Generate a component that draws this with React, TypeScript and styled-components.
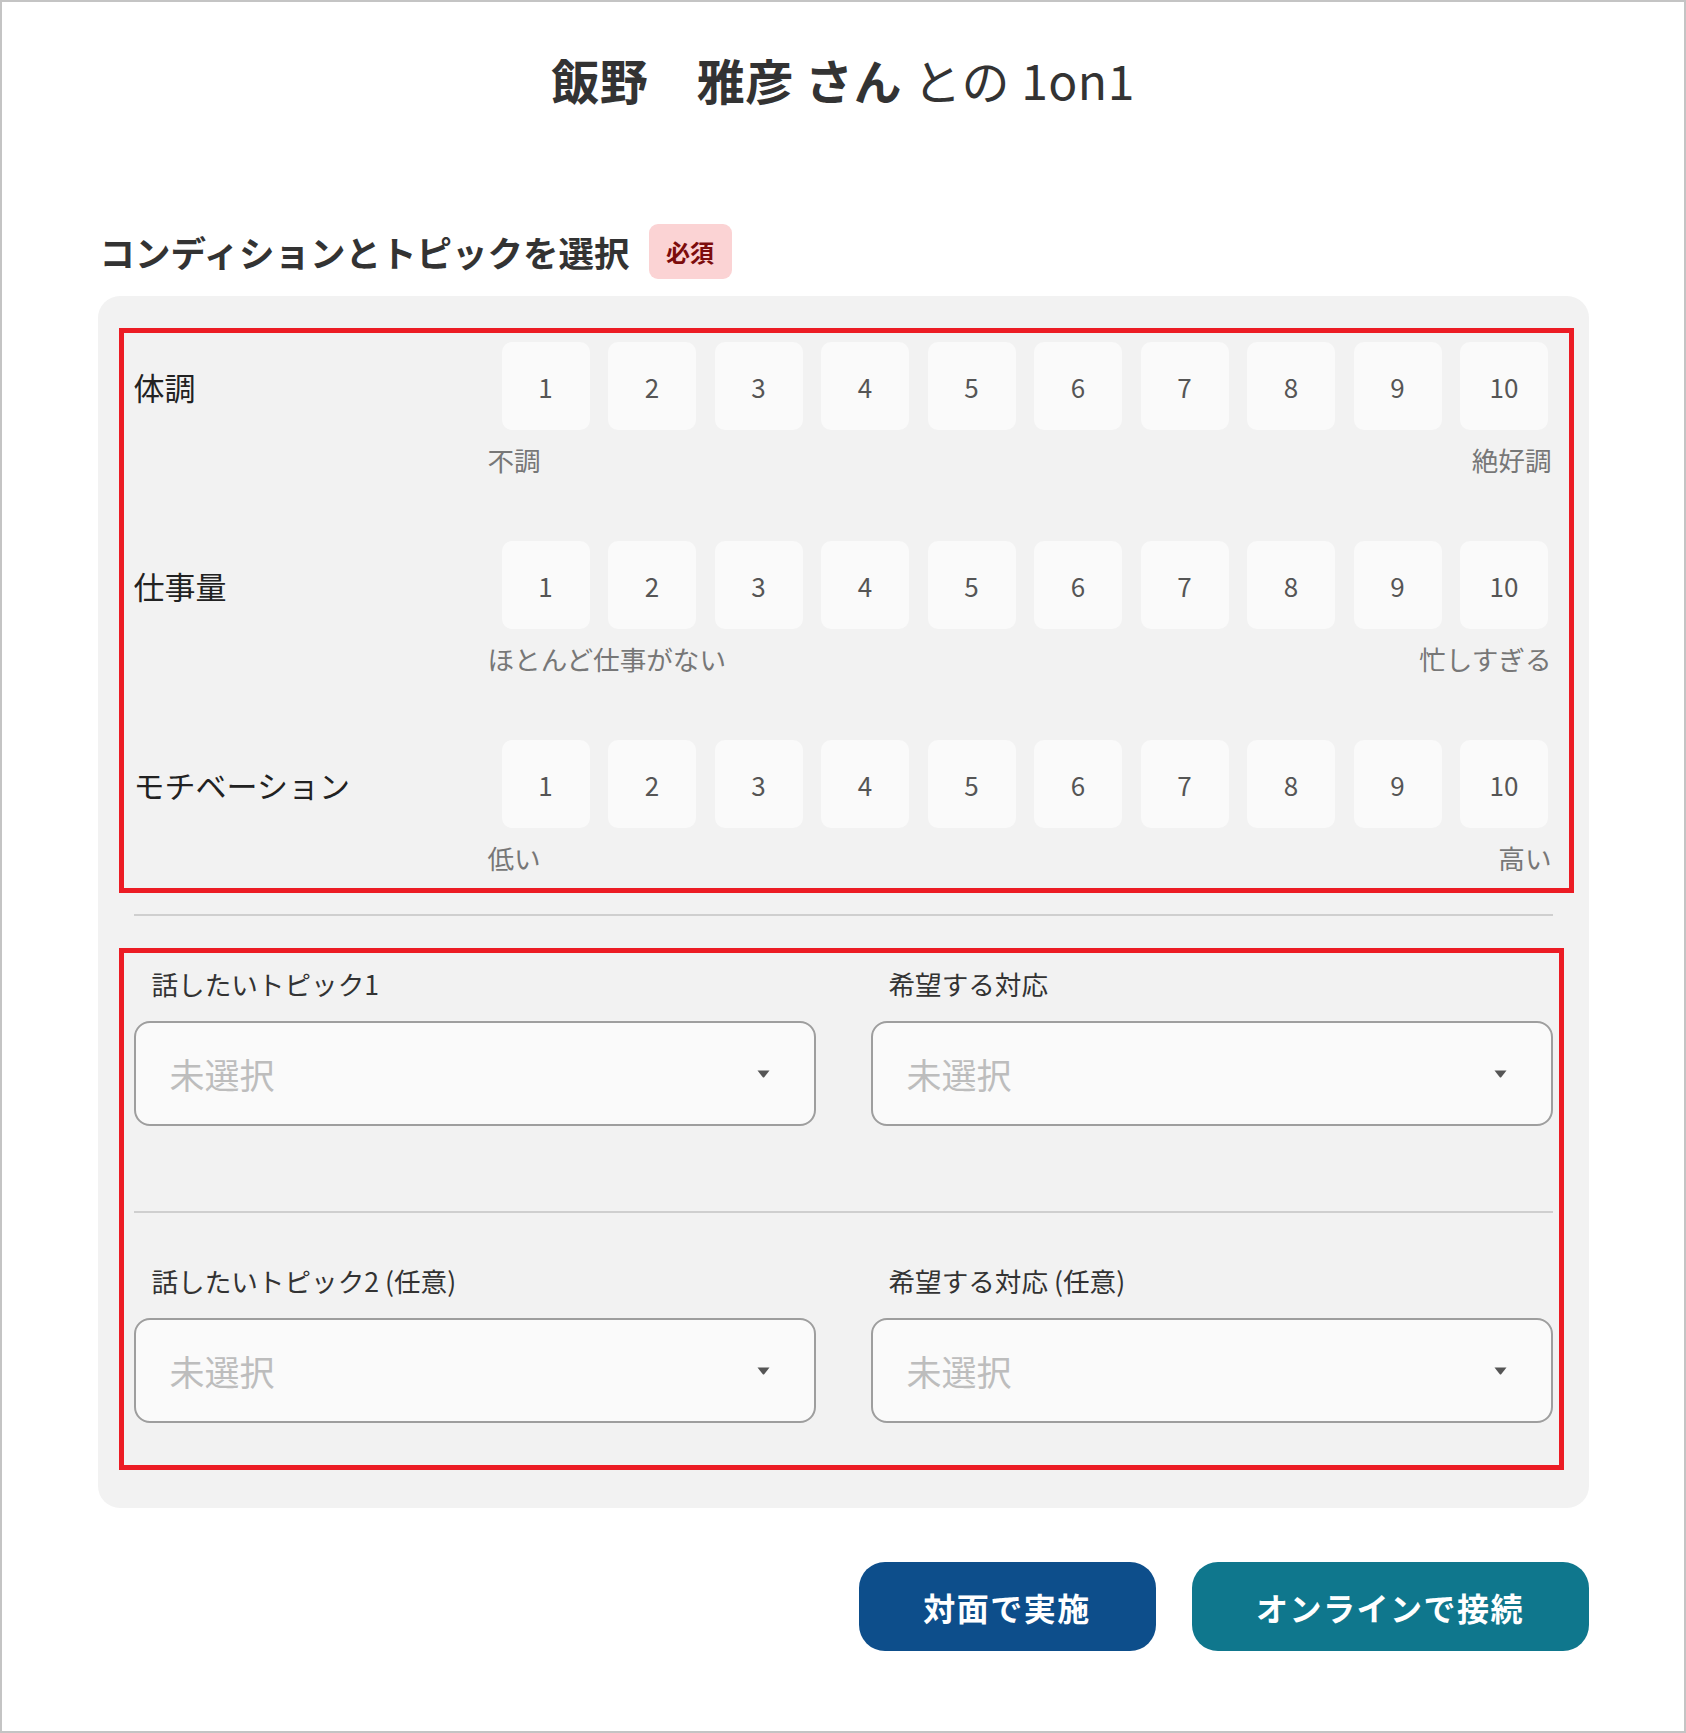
import React from "react";
import styled, { createGlobalStyle } from "styled-components";

const GlobalStyle = createGlobalStyle`
  html, body {
    margin: 0;
    padding: 0;
    background: #ffffff;
  }
  body {
    font-family: "Noto Sans CJK JP", "Noto Sans", sans-serif;
    color: #333333;
  }
  * { box-sizing: border-box; }
`;

const Page = styled.div`
  width: 1686px;
  height: 1733px;
  border: 2px solid #c4c4c4;
  background: #ffffff;
  padding-top: 41px;
  display: flex;
  flex-direction: column;
  align-items: center;
`;

const Title = styled.h1`
  margin: 0;
  font-size: 48px;
  line-height: 72px;
  font-weight: 400;
  color: #333333;
  letter-spacing: 0.5px;
`;

const TitleStrong = styled.span`
  font-weight: 700;
`;

const Container = styled.div`
  width: 1491px;
  margin-top: 109px;
  display: flex;
  flex-direction: column;
`;

const HeadingRow = styled.div`
  display: flex;
  align-items: center;
  gap: 19px;
  height: 55px;
  padding-left: 2px;
`;

const Heading = styled.h2`
  margin: 0;
  font-size: 35.5px;
  line-height: 1;
  font-weight: 700;
  color: #333333;
  letter-spacing: 0;
`;

const Badge = styled.span`
  display: flex;
  align-items: center;
  justify-content: center;
  width: 83px;
  height: 55px;
  border-radius: 9px;
  background: #fbd3d4;
  color: #7d0c0c;
  font-size: 24px;
  font-weight: 700;
`;

const Panel = styled.div`
  margin-top: 17px;
  background: #f2f2f2;
  border-radius: 22px;
  padding: 32px 15px 38px 21px;
  display: flex;
  flex-direction: column;
`;

const HighlightBox = styled.div<{ $pad: string; $mr?: number }>`
  border: 5px solid #ec1c24;
  padding: ${(p) => p.$pad};
  margin-right: ${(p) => p.$mr ?? 0}px;
  display: flex;
  flex-direction: column;
`;

const ScaleList = styled.div`
  display: flex;
  flex-direction: column;
  gap: 63px;
`;

const ScaleRow = styled.div`
  display: flex;
  align-items: flex-start;
`;

const RowLabel = styled.div`
  flex: 1;
  height: 88px;
  display: flex;
  align-items: center;
  font-size: 31px;
  color: #222222;
`;

const ScaleColumn = styled.div`
  width: 1064px;
  display: flex;
  flex-direction: column;
`;

const Boxes = styled.div`
  display: flex;
  gap: 18.5px;
  padding-left: 14px;
`;

const NumBox = styled.button`
  width: 88px;
  height: 88px;
  border: none;
  border-radius: 10px;
  background: #fafafa;
  font-family: "Noto Sans CJK JP", "Noto Sans", sans-serif;
  font-size: 26px;
  color: #555555;
  display: flex;
  align-items: center;
  justify-content: center;
  padding: 0;
`;

const Anchors = styled.div`
  margin-top: 12px;
  display: flex;
  justify-content: space-between;
  font-size: 26.6px;
  line-height: 36px;
  color: #777777;
`;

const Divider = styled.div<{ $m: string }>`
  height: 2px;
  background: #cfcfcf;
  margin: ${(p) => p.$m};
`;

const FieldGrid = styled.div`
  display: grid;
  grid-template-columns: 682px 682px;
  column-gap: 55px;
`;

const Field = styled.div`
  display: flex;
  flex-direction: column;
`;

const FieldLabel = styled.label`
  padding-left: 18px;
  font-size: 26.6px;
  line-height: 36px;
  color: #333333;
  margin-bottom: 19px;
  white-space: pre;
`;

const Select = styled.div`
  height: 105px;
  border: 2px solid #9e9e9e;
  border-radius: 16px;
  background: #fafafa;
  padding: 0 44px 0 34px;
  display: flex;
  align-items: center;
  justify-content: space-between;
`;

const Placeholder = styled.span`
  font-size: 35px;
  color: #bdbdbd;
`;

const Buttons = styled.div`
  margin-top: 54px;
  display: flex;
  justify-content: flex-end;
  gap: 36px;
`;

const ActionButton = styled.button<{ $bg: string; $w: number }>`
  width: ${(p) => p.$w}px;
  height: 89px;
  border: none;
  border-radius: 26px;
  background: ${(p) => p.$bg};
  color: #ffffff;
  font-family: "Noto Sans CJK JP", "Noto Sans", sans-serif;
  font-size: 32px;
  font-weight: 700;
  letter-spacing: 1.5px;
`;

const Caret = () => (
  <svg width="13" height="8" viewBox="0 0 13 8">
    <path d="M0.5 0.5 H12.5 L7.2 7.2 Q6.5 8 5.8 7.2 Z" fill="#555555" />
  </svg>
);

const scales = [
  { label: "体調", low: "不調", high: "絶好調" },
  { label: "仕事量", low: "ほとんど仕事がない", high: "忙しすぎる" },
  { label: "モチベーション", low: "低い", high: "高い" },
];

const nums = [1, 2, 3, 4, 5, 6, 7, 8, 9, 10];

const fieldRows = [
  ["話したいトピック1", "希望する対応"],
  ["話したいトピック2 (任意)", "希望する対応 (任意)"],
];

export default function App() {
  return (
    <>
      <GlobalStyle />
      <Page>
        <Title>
          <TitleStrong>飯野　雅彦 さん</TitleStrong> との 1on1
        </Title>
        <Container>
          <HeadingRow>
            <Heading>コンディションとトピックを選択</Heading>
            <Badge>必須</Badge>
          </HeadingRow>
          <Panel>
            <HighlightBox $pad="9px 17px 12px 10px">
              <ScaleList>
                {scales.map((s) => (
                  <ScaleRow key={s.label}>
                    <RowLabel>{s.label}</RowLabel>
                    <ScaleColumn>
                      <Boxes>
                        {nums.map((n) => (
                          <NumBox key={n}>{n}</NumBox>
                        ))}
                      </Boxes>
                      <Anchors>
                        <span>{s.low}</span>
                        <span>{s.high}</span>
                      </Anchors>
                    </ScaleColumn>
                  </ScaleRow>
                ))}
              </ScaleList>
            </HighlightBox>
            <Divider $m="21px 21px 32px 15px" />
            <HighlightBox $pad="13px 6px 42px 10px" $mr={10}>
              {fieldRows.map((row, i) => (
                <React.Fragment key={i}>
                  {i > 0 && <Divider $m="85px 0 50px 0" />}
                  <FieldGrid>
                    {row.map((label) => (
                      <Field key={label}>
                        <FieldLabel>{label}</FieldLabel>
                        <Select>
                          <Placeholder>未選択</Placeholder>
                          <Caret />
                        </Select>
                      </Field>
                    ))}
                  </FieldGrid>
                </React.Fragment>
              ))}
            </HighlightBox>
          </Panel>
          <Buttons>
            <ActionButton $bg="#0d4e8b" $w={297}>対面で実施</ActionButton>
            <ActionButton $bg="#0f778d" $w={397}>オンラインで接続</ActionButton>
          </Buttons>
        </Container>
      </Page>
    </>
  );
}
